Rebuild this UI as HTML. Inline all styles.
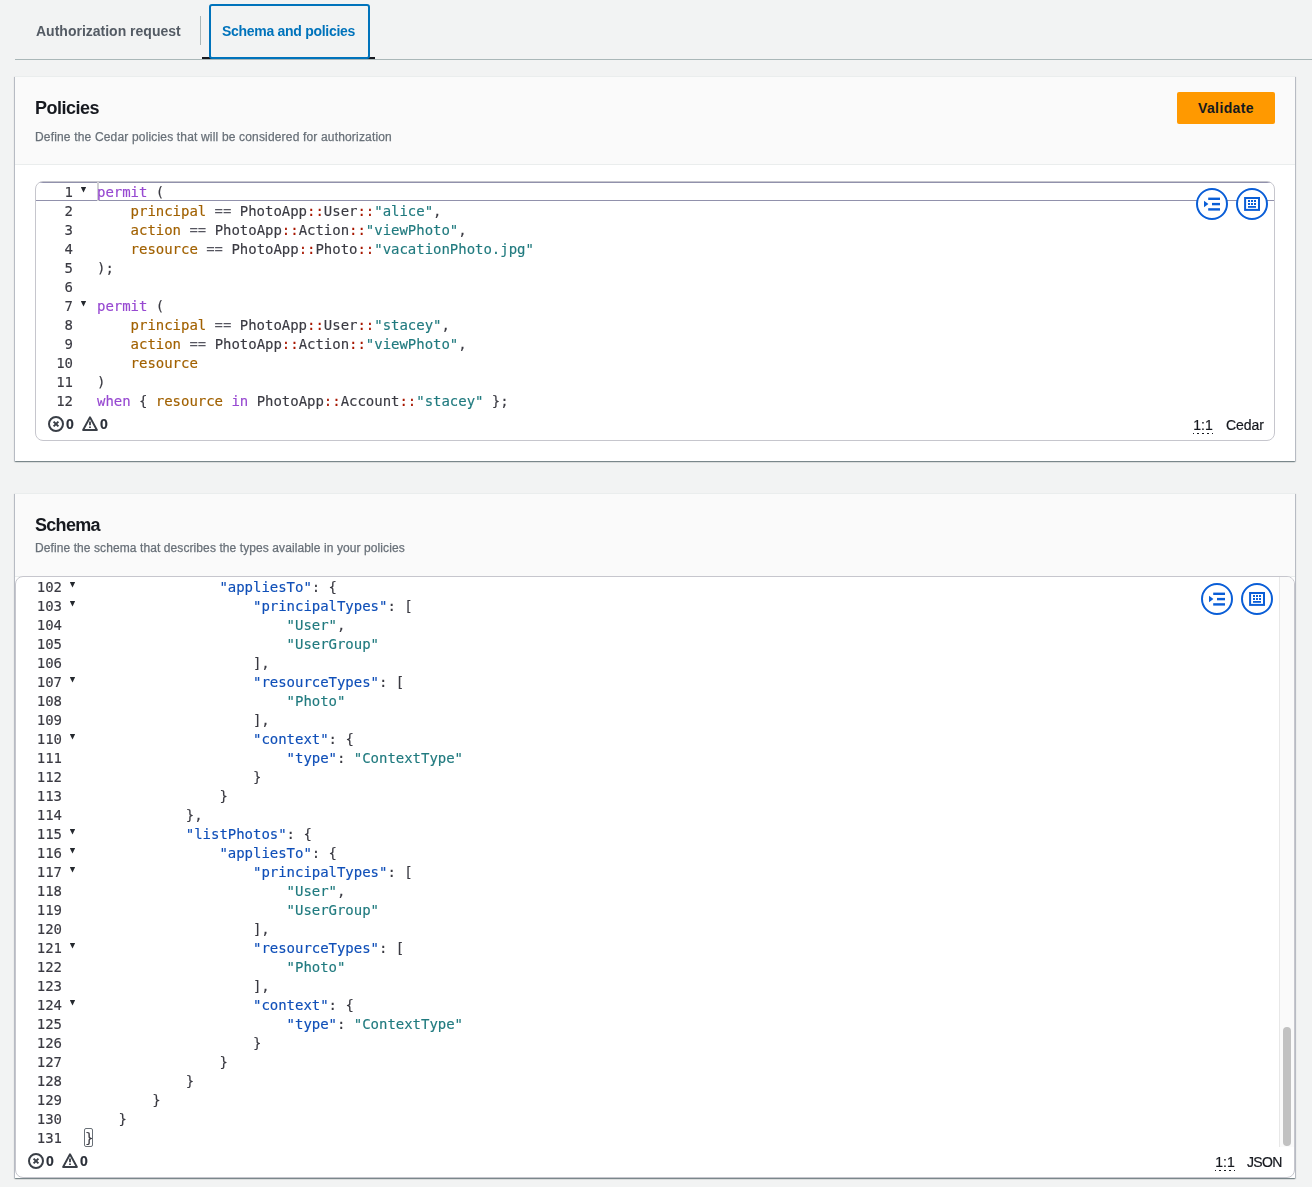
<!DOCTYPE html>
<html lang="en"><head><meta charset="utf-8"><title>Schema and policies</title>
<style>
*{box-sizing:border-box;margin:0;padding:0}
html,body{width:1312px;height:1187px;overflow:hidden}
body{-webkit-font-smoothing:antialiased;background:#f2f3f3;font-family:"Liberation Sans",sans-serif;color:#16191f;position:relative}
.abs{position:absolute}
.tab,.h2,.desc,.btn,.ed{will-change:opacity}
.tabline{position:absolute;left:15px;top:59px;width:1297px;height:1px;background:#aab7b8}
.tab{position:absolute;top:22px;font-size:14px;font-weight:700;line-height:18px;white-space:nowrap}
.t1{left:36px;color:#545b64}
.t2{left:222px;color:#0073bb;letter-spacing:-.29px}
.tsep{position:absolute;left:200px;top:16px;width:1px;height:29px;background:#aab7b8}
.tul{position:absolute;left:202px;top:57px;width:173px;height:2px;background:#16191f}
.tfocus{position:absolute;left:209px;top:4px;width:161px;height:55px;border:2px solid #0073bb;border-radius:3px;background:#f2f3f3}
.box{position:absolute;left:15px;width:1280px;background:#fff;border-top:1px solid #eaeded;box-shadow:0 1px 1px 0 rgba(0,28,36,.3),1px 1px 1px 0 rgba(0,28,36,.15),-1px 1px 1px 0 rgba(0,28,36,.15)}
.box:before,.box:after{content:'';position:absolute;top:0;bottom:0;width:1px;background:rgba(70,60,140,.09)}.box:before{left:-1px}.box:after{right:-1px}
.hd{position:absolute;left:0;top:0;width:100%;background:#fafafa;border-bottom:1px solid #eaeded}
.h2{position:absolute;left:20px;font-size:18px;font-weight:700;line-height:22px;color:#16191f;white-space:nowrap}
.desc{position:absolute;left:20px;font-size:12px;line-height:16px;color:#687078;white-space:nowrap;-webkit-text-stroke:.25px}
.btn{position:absolute;left:1162px;top:15px;width:98px;height:32px;background:#ff9900;border-radius:2px;color:#16191f;font-size:14px;font-weight:700;line-height:32px;text-align:center;letter-spacing:.4px}
.ed{position:absolute;background:#fff;border:1px solid #c6c6cd;overflow:hidden;font-family:"DejaVu Sans Mono","Liberation Mono",monospace;font-size:14px;letter-spacing:-.03px;line-height:19px;color:#3a3a42;-webkit-text-stroke:.15px}
.ln{position:relative;height:19px;white-space:pre}
.n{position:absolute;left:0;top:1px;text-align:right}
.c{position:absolute;top:1px}
.f{position:absolute;top:5px;width:5.4px;height:5.6px;background:#24282e;clip-path:polygon(0 0,100% 0,50% 100%)}
.k{color:#9749d1}.e{color:#55555f;-webkit-text-stroke:0}.v{color:#a16101}.o{color:#a81700}.s{color:#207a7f}.j{color:#0f4fb8}
.brb{position:absolute;left:68px;top:0;width:8.5px;height:19px;border:1px solid #697077;border-radius:2px}
.act{position:absolute;left:0;top:0;width:100%;height:19px;border-top:1px solid #9191ac;border-bottom:1px solid #9191ac}
.cur{position:absolute;width:2px;height:19px;background:#d0d0d4;top:0}
.ib{position:absolute}
#ed1 .n{width:37px}#ed1 .c{left:61px}#ed1 .f{left:44.8px}
#ed2 .n{width:46px}#ed2 .c{left:69px}#ed2 .f{left:53.8px}
.track{position:absolute;left:1263px;top:0;width:15px;height:570px;background:#fafafa;border-left:1px solid #e8e8e8}
.thumb{position:absolute;left:1267px;top:450px;width:8px;height:119px;border-radius:4px;background:#c1c1c1}
.sb{position:absolute;font-family:"Liberation Sans",sans-serif;font-size:14px;line-height:16px;color:#16191f;white-space:nowrap;-webkit-text-stroke:.2px}
.sb svg{position:absolute;top:0}
.sb b{position:absolute;top:0;font-weight:700;color:#2a2f38}
.dot{display:inline-block;width:20px;height:19px;text-align:center;background:repeating-linear-gradient(90deg,#16191f 0,#16191f 2.4px,transparent 2.4px,transparent 5px) -1.3px 16px/25px 1px no-repeat}
</style></head><body>
<div class="tabline"></div>
<div class="tab t1">Authorization request</div>
<div class="tsep"></div>
<div class="tul"></div>
<div class="tfocus"></div>
<div class="tab t2">Schema and policies</div>

<div class="box" style="top:76px;height:385px">
 <div class="hd" style="height:88px"></div>
 <div class="h2" style="top:20px;letter-spacing:-.5px">Policies</div>
 <div class="desc" style="top:52px;letter-spacing:.17px">Define the Cedar policies that will be considered for authorization</div>
 <div class="btn">Validate</div>
 <div class="ed" id="ed1" style="left:20px;top:104px;width:1240px;height:260px;border-radius:8px">
  <div class="act"></div><div class="cur" style="left:61px"></div>
  <div class="code" id="c1">
<div class="ln"><span class="n">1</span><i class="f"></i><span class="c"><span class="k">permit</span> (</span></div>
<div class="ln"><span class="n">2</span><span class="c">    <span class="v">principal</span> <span class="e">==</span> PhotoApp<span class="o">::</span>User<span class="o">::</span><span class="s">"alice"</span>,</span></div>
<div class="ln"><span class="n">3</span><span class="c">    <span class="v">action</span> <span class="e">==</span> PhotoApp<span class="o">::</span>Action<span class="o">::</span><span class="s">"viewPhoto"</span>,</span></div>
<div class="ln"><span class="n">4</span><span class="c">    <span class="v">resource</span> <span class="e">==</span> PhotoApp<span class="o">::</span>Photo<span class="o">::</span><span class="s">"vacationPhoto.jpg"</span></span></div>
<div class="ln"><span class="n">5</span><span class="c">);</span></div>
<div class="ln"><span class="n">6</span><span class="c"></span></div>
<div class="ln"><span class="n">7</span><i class="f"></i><span class="c"><span class="k">permit</span> (</span></div>
<div class="ln"><span class="n">8</span><span class="c">    <span class="v">principal</span> <span class="e">==</span> PhotoApp<span class="o">::</span>User<span class="o">::</span><span class="s">"stacey"</span>,</span></div>
<div class="ln"><span class="n">9</span><span class="c">    <span class="v">action</span> <span class="e">==</span> PhotoApp<span class="o">::</span>Action<span class="o">::</span><span class="s">"viewPhoto"</span>,</span></div>
<div class="ln"><span class="n">10</span><span class="c">    <span class="v">resource</span></span></div>
<div class="ln"><span class="n">11</span><span class="c">)</span></div>
<div class="ln"><span class="n">12</span><span class="c"><span class="k">when</span> { <span class="v">resource</span> <span class="k">in</span> PhotoApp<span class="o">::</span>Account<span class="o">::</span><span class="s">"stacey"</span> };</span></div>
  </div>
  <div style="position:absolute;left:1160px;top:6px"><svg class="ib" viewBox="0 0 32 32" width="32" height="32"><circle cx="16" cy="16" r="15" fill="#fff" stroke="#0a5ed7" stroke-width="2"/><rect x="12.2" y="9.6" width="11.8" height="2.4" fill="#0a5ed7"/><rect x="16" y="14.9" width="8" height="2.4" fill="#0a5ed7"/><rect x="12.2" y="20.2" width="11.8" height="2.4" fill="#0a5ed7"/><path d="M8 12.8 L12.4 16 L8 19.2Z" fill="#0a5ed7"/></svg></div>
  <div style="position:absolute;left:1200px;top:6px"><svg class="ib" viewBox="0 0 32 32" width="32" height="32"><circle cx="16" cy="16" r="15" fill="#fff" stroke="#0a5ed7" stroke-width="2"/><rect x="9.1" y="10" width="13.9" height="11.9" fill="none" stroke="#0a5ed7" stroke-width="2"/><g fill="#0a5ed7"><rect x="12" y="12" width="2" height="2"/><rect x="15" y="12" width="2" height="2"/><rect x="18" y="12" width="2" height="2"/><rect x="12" y="15" width="2" height="2"/><rect x="15" y="15" width="2" height="2"/><rect x="18" y="15" width="2" height="2"/><rect x="12" y="18" width="8" height="1.8"/></g></svg></div>
  <div class="sb" style="left:12px;top:234px;width:80px;height:16px"><svg viewBox="0 0 16 16" width="16" height="16"><circle cx="8" cy="8" r="7" fill="none" stroke="#3a3f47" stroke-width="2"/><path d="M5.6 5.6 L10.4 10.4 M10.4 5.6 L5.6 10.4" stroke="#3a3f47" stroke-width="2" fill="none"/></svg><b style="left:18px">0</b><span style="position:absolute;left:34px;top:0"><svg viewBox="0 0 16 16" width="16" height="16"><path d="M8 1.3 L14.9 14 H1.1 Z" fill="none" stroke="#3a3f47" stroke-width="1.9" stroke-linejoin="round"/><path d="M8 5.6 V9.3 M8 10.4 V12" stroke="#3a3f47" stroke-width="1.8" fill="none"/></svg></span><b style="left:52px">0</b></div>
  <div class="sb" style="left:1157px;top:235px"><span class="dot">1:1</span></div>
  <div class="sb" style="left:1190px;top:235px">Cedar</div>
 </div>
</div>

<div class="box" style="top:493px;height:685px">
 <div class="hd" style="height:83px"></div>
 <div class="h2" style="top:20px;letter-spacing:-.7px">Schema</div>
 <div class="desc" style="top:46px;letter-spacing:.09px">Define the schema that describes the types available in your policies</div>
 <div class="ed" id="ed2" style="left:0;top:82px;width:1280px;height:602px;border-radius:8px">
  <div class="code" id="c2">
<div class="ln"><span class="n">102</span><i class="f"></i><span class="c">                <span class="j">"appliesTo"</span>: {</span></div>
<div class="ln"><span class="n">103</span><i class="f"></i><span class="c">                    <span class="j">"principalTypes"</span>: [</span></div>
<div class="ln"><span class="n">104</span><span class="c">                        <span class="s">"User"</span>,</span></div>
<div class="ln"><span class="n">105</span><span class="c">                        <span class="s">"UserGroup"</span></span></div>
<div class="ln"><span class="n">106</span><span class="c">                    ],</span></div>
<div class="ln"><span class="n">107</span><i class="f"></i><span class="c">                    <span class="j">"resourceTypes"</span>: [</span></div>
<div class="ln"><span class="n">108</span><span class="c">                        <span class="s">"Photo"</span></span></div>
<div class="ln"><span class="n">109</span><span class="c">                    ],</span></div>
<div class="ln"><span class="n">110</span><i class="f"></i><span class="c">                    <span class="j">"context"</span>: {</span></div>
<div class="ln"><span class="n">111</span><span class="c">                        <span class="j">"type"</span>: <span class="s">"ContextType"</span></span></div>
<div class="ln"><span class="n">112</span><span class="c">                    }</span></div>
<div class="ln"><span class="n">113</span><span class="c">                }</span></div>
<div class="ln"><span class="n">114</span><span class="c">            },</span></div>
<div class="ln"><span class="n">115</span><i class="f"></i><span class="c">            <span class="j">"listPhotos"</span>: {</span></div>
<div class="ln"><span class="n">116</span><i class="f"></i><span class="c">                <span class="j">"appliesTo"</span>: {</span></div>
<div class="ln"><span class="n">117</span><i class="f"></i><span class="c">                    <span class="j">"principalTypes"</span>: [</span></div>
<div class="ln"><span class="n">118</span><span class="c">                        <span class="s">"User"</span>,</span></div>
<div class="ln"><span class="n">119</span><span class="c">                        <span class="s">"UserGroup"</span></span></div>
<div class="ln"><span class="n">120</span><span class="c">                    ],</span></div>
<div class="ln"><span class="n">121</span><i class="f"></i><span class="c">                    <span class="j">"resourceTypes"</span>: [</span></div>
<div class="ln"><span class="n">122</span><span class="c">                        <span class="s">"Photo"</span></span></div>
<div class="ln"><span class="n">123</span><span class="c">                    ],</span></div>
<div class="ln"><span class="n">124</span><i class="f"></i><span class="c">                    <span class="j">"context"</span>: {</span></div>
<div class="ln"><span class="n">125</span><span class="c">                        <span class="j">"type"</span>: <span class="s">"ContextType"</span></span></div>
<div class="ln"><span class="n">126</span><span class="c">                    }</span></div>
<div class="ln"><span class="n">127</span><span class="c">                }</span></div>
<div class="ln"><span class="n">128</span><span class="c">            }</span></div>
<div class="ln"><span class="n">129</span><span class="c">        }</span></div>
<div class="ln"><span class="n">130</span><span class="c">    }</span></div>
<div class="ln"><span class="n">131</span><i class="brb"></i><span class="c">}</span></div>
  </div>
  <div style="position:absolute;left:1185px;top:6px"><svg class="ib" viewBox="0 0 32 32" width="32" height="32"><circle cx="16" cy="16" r="15" fill="#fff" stroke="#0a5ed7" stroke-width="2"/><rect x="12.2" y="9.6" width="11.8" height="2.4" fill="#0a5ed7"/><rect x="16" y="14.9" width="8" height="2.4" fill="#0a5ed7"/><rect x="12.2" y="20.2" width="11.8" height="2.4" fill="#0a5ed7"/><path d="M8 12.8 L12.4 16 L8 19.2Z" fill="#0a5ed7"/></svg></div>
  <div style="position:absolute;left:1225px;top:6px"><svg class="ib" viewBox="0 0 32 32" width="32" height="32"><circle cx="16" cy="16" r="15" fill="#fff" stroke="#0a5ed7" stroke-width="2"/><rect x="9.1" y="10" width="13.9" height="11.9" fill="none" stroke="#0a5ed7" stroke-width="2"/><g fill="#0a5ed7"><rect x="12" y="12" width="2" height="2"/><rect x="15" y="12" width="2" height="2"/><rect x="18" y="12" width="2" height="2"/><rect x="12" y="15" width="2" height="2"/><rect x="15" y="15" width="2" height="2"/><rect x="18" y="15" width="2" height="2"/><rect x="12" y="18" width="8" height="1.8"/></g></svg></div>
  <div class="track"></div><div class="thumb"></div>
  <div class="sb" style="left:12px;top:576px;width:80px;height:16px"><svg viewBox="0 0 16 16" width="16" height="16"><circle cx="8" cy="8" r="7" fill="none" stroke="#3a3f47" stroke-width="2"/><path d="M5.6 5.6 L10.4 10.4 M10.4 5.6 L5.6 10.4" stroke="#3a3f47" stroke-width="2" fill="none"/></svg><b style="left:18px">0</b><span style="position:absolute;left:34px;top:0"><svg viewBox="0 0 16 16" width="16" height="16"><path d="M8 1.3 L14.9 14 H1.1 Z" fill="none" stroke="#3a3f47" stroke-width="1.9" stroke-linejoin="round"/><path d="M8 5.6 V9.3 M8 10.4 V12" stroke="#3a3f47" stroke-width="1.8" fill="none"/></svg></span><b style="left:52px">0</b></div>
  <div class="sb" style="left:1199px;top:577px"><span class="dot">1:1</span></div>
  <div class="sb" style="left:1231px;top:577px;letter-spacing:-.65px">JSON</div>
 </div>
</div>
</body></html>
